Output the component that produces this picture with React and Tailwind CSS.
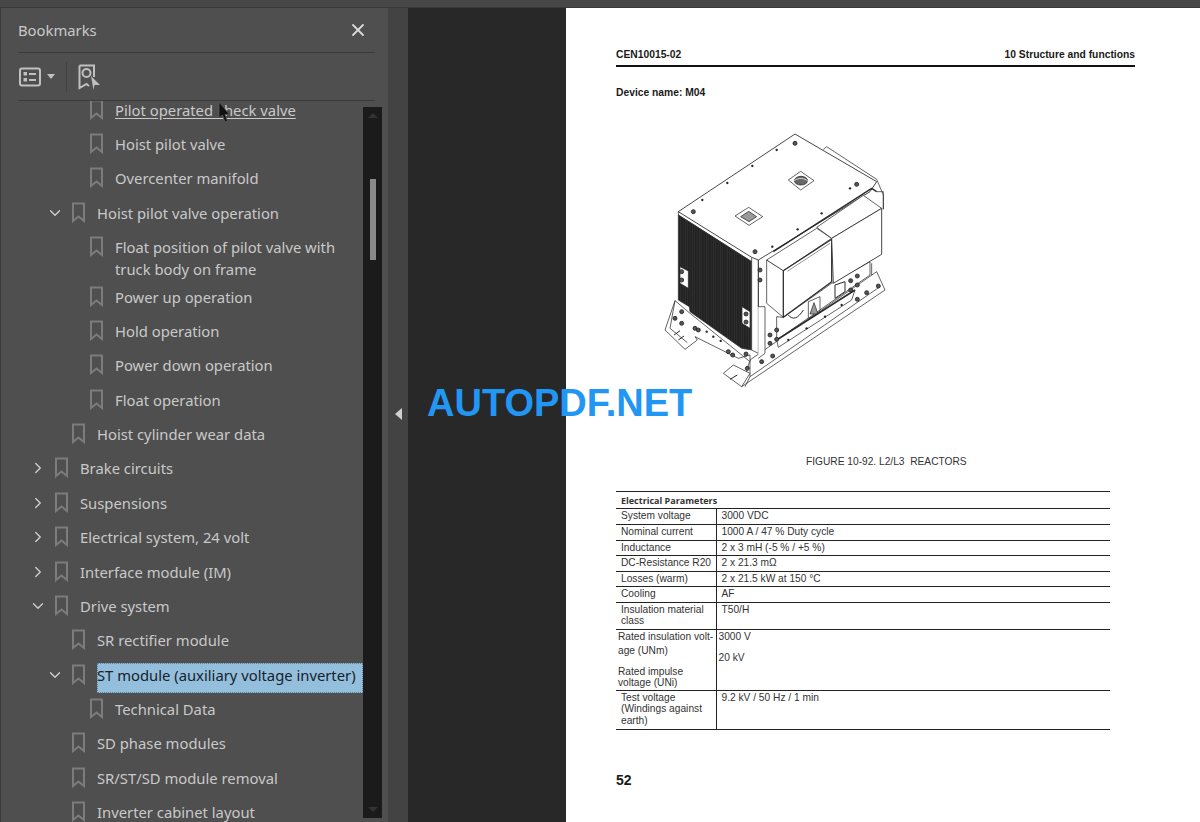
import { ChevronDown, ChevronRight, X } from 'lucide-react';

const rows = [
    { level: 3, title: 'Pilot operated check valve', link: true },
    { level: 3, title: 'Hoist pilot valve' },
    { level: 3, title: 'Overcenter manifold' },
    { level: 2, title: 'Hoist pilot valve operation', open: true },
    { level: 3, title: 'Float position of pilot valve with truck body on frame', wrapped: true },
    { level: 3, title: 'Power up operation' },
    { level: 3, title: 'Hold operation' },
    { level: 3, title: 'Power down operation' },
    { level: 3, title: 'Float operation' },
    { level: 2, title: 'Hoist cylinder wear data' },
    { level: 1, title: 'Brake circuits', closed: true },
    { level: 1, title: 'Suspensions', closed: true },
    { level: 1, title: 'Electrical system, 24 volt', closed: true },
    { level: 1, title: 'Interface module (IM)', closed: true },
    { level: 1, title: 'Drive system', open: true },
    { level: 2, title: 'SR rectifier module' },
    { level: 2, title: 'ST module (auxiliary voltage inverter)', open: true, selected: true },
    { level: 3, title: 'Technical Data' },
    { level: 2, title: 'SD phase modules' },
    { level: 2, title: 'SR/ST/SD module removal' },
    { level: 2, title: 'Inverter cabinet layout' },
];

const levelPad = { 1: 'pl-[31px]', 2: 'pl-[48px]', 3: 'pl-[66px]' };

const params = [
    ['System voltage', '3000 VDC', 'h-[16px]'],
    ['Nominal current', '1000 A / 47 % Duty cycle', 'h-[15.5px]'],
    ['Inductance', '2 x 3 mH (-5 % / +5 %)', 'h-[15.5px]'],
    ['DC-Resistance R20', '2 x 21.3 mΩ', 'h-[15.5px]'],
    ['Losses (warm)', '2 x 21.5 kW at 150 °C', 'h-[15.5px]'],
    ['Cooling', 'AF', 'h-[15.5px]'],
    ['Insulation material class', 'T50/H', 'h-[27px]'],
];

const BookmarkIcon = () => (
    <svg width="13" height="21" viewBox="0 0 13 21" className="shrink-0" fill="none" stroke="#7c7c7c" strokeWidth="2">
        <path d="M1 1.5H12V19L6.5 14.5L1 19Z" />
    </svg>
);

const BookmarkRow = ({ row }) => (
    <div className={`flex items-start py-[6.2px] ${levelPad[row.level]} ${row.wrapped ? '-mb-[7px]' : ''}`}>
        <div className="w-[23px] h-[22px] shrink-0 flex items-center">
            {row.open && <ChevronDown size={18} strokeWidth={1.8} color="#cfcfcf" className="-ml-[3px]" />}
            {row.closed && <ChevronRight size={18} strokeWidth={1.8} color="#cfcfcf" className="-ml-[3px]" />}
        </div>
        <BookmarkIcon />
        {row.selected ? (
            <div className="ml-[12px] flex-1 -mt-px -mb-[7px] pb-[6px] bg-[#94bfdc] border border-dotted border-[#5f7f96] text-[#16222c] leading-[22px]">
                <span className="-ml-px whitespace-nowrap">{row.title}</span>
            </div>
        ) : (
            <div className={`ml-[12px] pr-[20px] leading-[22px] text-[#c9c9c9] ${row.link ? 'underline underline-offset-2' : ''}`}>
                {row.title}
            </div>
        )}
    </div>
);

// line drawing of the reactor, coordinates are 3x page pixels
const dots = [
    [380, 90], [307, 138], [232, 189], [157, 240], [600, 205], [515, 280], [443, 328], [367, 380],
    [170, 635], [190, 650], [212, 663], [470, 625], [525, 590], [575, 555], [415, 660],
];

const rings = [
    [130, 275], [435, 70], [620, 193], [315, 395], [95, 575], [75, 595], [95, 610], [135, 625],
    [145, 630], [235, 695], [248, 705], [288, 702], [292, 745], [335, 725], [368, 708], [622, 538],
    [650, 518], [685, 498], [602, 482], [622, 468], [602, 510], [622, 495], [380, 630], [360, 645],
    [380, 658], [360, 670], [95, 455], [95, 480], [288, 582], [288, 606], [330, 450], [330, 480],
];

const Reactor = () => (
    <svg width="250" height="280" viewBox="0 0 750 840" fill="none" stroke="#2a2a2a" strokeWidth="2.2" strokeLinejoin="round">
        <defs>
            <pattern id="mesh" width="7" height="7" patternUnits="userSpaceOnUse">
                <rect width="7" height="7" fill="#222" stroke="none" />
                <path d="M0 0V7" stroke="#666" strokeWidth="1" />
            </pattern>
        </defs>
        {/* rear tab */}
        <path d="M520 88L530 80L680 178L700 225V268" />
        {/* base plate */}
        <path d="M275 800L300 720L680 455L705 510Z" fill="#fff" />
        <path d="M300 720V770L285 800M300 770L690 500" />
        <path d="M665 430V465" />
        <path d="M220 760L250 735L300 760L275 800Z" fill="#fff" />
        <path d="M240 778L262 765" strokeWidth="3" />
        {/* left foot */}
        <path d="M75 542L45 630L105 688L142 660L135 650L265 715L300 705V725L120 580Z" fill="#fff" />
        <path d="M75 542L60 625L112 668" />
        <path d="M72 645L90 632M85 660L102 648" strokeWidth="3" />
        {/* body */}
        <path d="M85 285L305 425V690L275 685L120 575L118 560L85 540Z" fill="url(#mesh)" />
        <path d="M305 412V690L325 700V420" fill="#fff" />
        <path d="M325 420V560H345V700L325 715" fill="#fff" />
        <path d="M90 440L115 453V505L90 490Z" fill="#fff" />
        <path d="M276 560L300 575V625L276 610Z" fill="#fff" />
        {/* lid */}
        <path d="M85 275L435 42L680 185L660 215L325 420L305 412Z" fill="#fff" strokeWidth="2.6" />
        <path d="M85 275V285L305 425" />
        <path d="M370 395L665 205L680 215" strokeWidth="4" />
        <path d="M255 288L296 262L338 290L297 316Z" fill="#fff" />
        <path d="M272 290L296 274L320 290L297 305Z" fill="#999" />
        <path d="M415 180L452 154L492 182L452 210Z" fill="#fff" />
        <ellipse cx="453" cy="182" rx="20" ry="13" fill="#666" />
        <path d="M432 182C445 172 465 174 474 184" stroke="#fff" />
        {/* boxes */}
        <path d="M380 590V660L660 465V425L545 490L400 592Z" fill="#fff" />
        <path d="M350 420L400 452V592L350 550Z" fill="#fff" />
        <path d="M350 420L500 325L545 355L400 452Z" fill="#fff" />
        <path d="M400 452L545 358V485L400 592Z" fill="#fff" strokeWidth="3.5" />
        <path d="M500 322L640 226L695 265L545 355Z" fill="#fff" />
        <path d="M545 355L695 265V403L550 490Z" fill="#fff" strokeWidth="2.6" />
        <path d="M680 215H700V268" />
        <path d="M412 454L540 370" strokeWidth="1.5" />
        <path d="M415 585C428 602 445 595 460 570" strokeWidth="3" />
        <path d="M475 545L510 530V570L475 595Z" fill="#fff" />
        <path d="M492 548L480 582H504Z" fill="#999" />
        <path d="M555 495L585 485V515L555 535Z" fill="#fff" strokeWidth="3" />
        {/* bracket bar */}
        <path d="M380 660L385 682L605 540L615 510" fill="#fff" />
        <path d="M380 660L615 510" strokeWidth="4.5" />
        {rings.map(([x, y]) => (
            <circle key={`${x}-${y}`} cx={x} cy={y} r="6" fill="#555" stroke="#222" strokeWidth="2.5" />
        ))}
        {dots.map(([x, y]) => (
            <circle key={`${x}-${y}`} cx={x} cy={y} r="3.5" fill="#222" stroke="none" />
        ))}
    </svg>
);

const Sidebar = () => (
    <aside className="w-[388px] shrink-0 h-full bg-[#4f4f4f] border-l border-[#3a3a3a] flex flex-col font-['Noto_Sans',sans-serif] text-[14.8px]">
        <div className="ml-[17px] mr-[13px] h-[45px] flex items-center justify-between border-b border-[#3b3b3b]">
            <span className="text-[#c9c9c9]">Bookmarks</span>
            <X size={20} strokeWidth={2.2} color="#d8d8d8" className="mr-[7px]" />
        </div>
        <div className="ml-[17px] mr-[13px] h-[48px] flex items-center border-b border-[#3b3b3b]">
            <svg width="24" height="20" viewBox="0 0 24 20" fill="none" stroke="#c0c0c0" strokeWidth="2">
                <rect x="2" y="1.5" width="20" height="17" rx="2" />
                <rect x="6" y="5.5" width="2.5" height="2.5" fill="#c0c0c0" strokeWidth="1" />
                <rect x="6" y="11.5" width="2.5" height="2.5" fill="#c0c0c0" strokeWidth="1" />
                <path d="M11 7H18M11 13H18" />
            </svg>
            <svg width="8" height="5" viewBox="0 0 8 5" className="ml-[5px]">
                <path d="M0 0H8L4 5Z" fill="#c0c0c0" />
            </svg>
            <div className="w-px h-[30px] bg-[#424242] ml-[11px]" />
            <svg width="22" height="26" viewBox="0 0 22 26" className="ml-[11px]" fill="none" stroke="#c0c0c0" strokeWidth="2">
                <path d="M1.5 1.5H16V13M1.5 1.5V24L8.5 20L11 22" />
                <circle cx="8.5" cy="9" r="4" />
                <path d="M13 12L22 21H16.5L15.5 26Z" fill="#c0c0c0" stroke="none" />
            </svg>
        </div>
        <div className="flex-1 min-h-0 flex">
            <div className="w-[362px] shrink-0 overflow-hidden h-full">
                <div className="-mt-[8.5px]">
                    {rows.map((row) => (
                        <BookmarkRow key={row.title} row={row} />
                    ))}
                </div>
            </div>
            <div className="w-[19px] mt-[6px] mb-[4px] bg-[#1b1b1b] flex flex-col items-center justify-between py-[6px]">
                <div className="w-0 h-0 border-x-[5px] border-x-transparent border-b-[5px] border-b-[#333]" />
                <div className="w-0 h-0 border-x-[5px] border-x-transparent border-t-[5px] border-t-[#333]" />
            </div>
        </div>
    </aside>
);

const Page = () => (
    <main className="w-[634px] shrink-0 h-full bg-white pl-[50px] pr-[65px] font-['Liberation_Sans',sans-serif] text-[#1a1a1a] flex flex-col">
        <div className="flex justify-between items-end h-[59px] pb-[4px] border-b-2 border-[#111] text-[10.3px] font-bold leading-[12px]">
            <span>CEN10015-02</span>
            <span>10 Structure and functions</span>
        </div>
        <div className="mt-[20px] text-[10.3px] font-bold leading-[12px]">Device name: M04</div>
        <div className="mt-[21px] ml-[34px]">
            <Reactor />
        </div>
        <div className="mt-[56px] pl-[190px] whitespace-nowrap text-[10.2px] leading-[12px] text-[#333]">FIGURE 10-92. L2/L3&nbsp;&nbsp;REACTORS</div>
        <table className="mt-[23px] w-[494px] border-collapse table-fixed text-[10.2px] leading-[11.5px] text-[#333]">
            <colgroup>
                <col className="w-[100px]" />
                <col />
            </colgroup>
            <tbody>
                <tr className="h-[17px] border-t border-b border-[#222]">
                    <td colSpan="2" className="px-[5px] pt-[1px] font-['Open_Sans',sans-serif] font-bold text-[9px] align-middle">Electrical Parameters</td>
                </tr>
                {params.map(([name, value, height]) => (
                    <tr key={name} className={`${height} border-b border-[#222]`}>
                        <td className="pl-[5px] pt-[1px] align-top border-r border-[#222]">{name}</td>
                        <td className="px-[5px] pt-[1px] align-top">{value}</td>
                    </tr>
                ))}
                <tr className="h-[61px] border-b border-[#222]">
                    <td className="pl-[2px] pt-[1px] align-top border-r border-[#222]">
                        <div className="whitespace-nowrap">Rated insulation volt-</div>
                        <div className="mt-[3px]">age (UNm)</div>
                        <div className="mt-[9px]">Rated impulse</div>
                        <div>voltage (UNi)</div>
                    </td>
                    <td className="pl-[2px] pt-[1px] align-top">
                        <div>3000 V</div>
                        <div className="mt-[10px]">20 kV</div>
                    </td>
                </tr>
                <tr className="h-[39px] border-b border-[#222]">
                    <td className="px-[5px] pt-[1px] align-top border-r border-[#222]">Test voltage (Windings against earth)</td>
                    <td className="px-[5px] pt-[1px] align-top">9.2 kV / 50 Hz / 1 min</td>
                </tr>
            </tbody>
        </table>
        <div className="mt-[42px] text-[14px] font-bold leading-[16px]">52</div>
    </main>
);

export default function App() {
    return (
        <div className="relative w-[1200px] h-[822px] overflow-hidden flex flex-col bg-[#282828]">
            <div className="h-[8px] shrink-0 bg-[#484848] border-b border-[#393939]" />
            <div className="flex-1 min-h-0 flex">
                <Sidebar />
                <div className="w-[20px] shrink-0 bg-[#434343] flex items-center justify-center">
                    <div className="w-0 h-0 border-y-[6px] border-y-transparent border-r-[7px] border-r-[#d0d0d0] mt-[-2px]" />
                </div>
                <div className="w-[158px] shrink-0" />
                <Page />
            </div>

            {/* scrollbar thumb, watermark and cursor sit over the rest */}
            <div className="absolute left-[370px] top-[179px] w-[6px] h-[81px] bg-[#8a8a8a]" />
            <div className="absolute left-[427px] top-[380px] text-[38px] leading-[46px] font-bold text-[#2196f3] font-['Liberation_Sans',sans-serif]">
                AUTOPDF.NET
            </div>
            <svg className="absolute left-[212px] top-[101px]" width="20" height="23" viewBox="0 0 20 23">
                <rect x="1" y="2" width="12" height="13" fill="#4f4f4f" />
                <path d="M7 1V17L10.5 14L13 21L15.5 20L13 13.5H17.5Z" fill="#111" stroke="#5a5a5a" strokeWidth="0.8" />
            </svg>
        </div>
    );
}
